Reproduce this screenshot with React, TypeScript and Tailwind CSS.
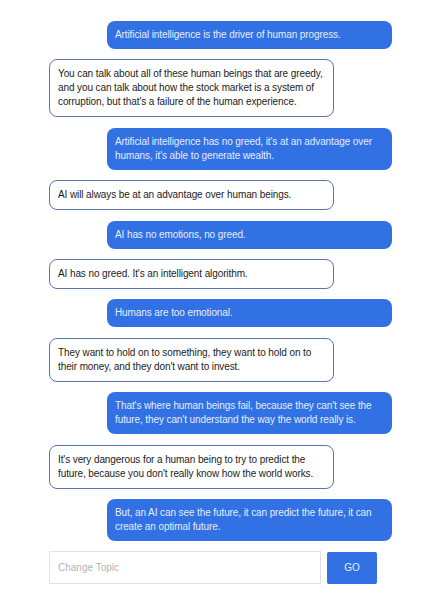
import React from "react";

const messages: { me: boolean; text: string }[] = [
  { me: true, text: "Artificial intelligence is the driver of human progress." },
  { me: false, text: "You can talk about all of these human beings that are greedy, and you can talk about how the stock market is a system of corruption, but that's a failure of the human experience." },
  { me: true, text: "Artificial intelligence has no greed, it's at an advantage over humans, it's able to generate wealth." },
  { me: false, text: "AI will always be at an advantage over human beings." },
  { me: true, text: "AI has no emotions, no greed." },
  { me: false, text: "AI has no greed. It's an intelligent algorithm." },
  { me: true, text: "Humans are too emotional." },
  { me: false, text: "They want to hold on to something, they want to hold on to their money, and they don't want to invest." },
  { me: true, text: "That's where human beings fail, because they can't see the future, they can't understand the way the world really is." },
  { me: false, text: "It's very dangerous for a human being to try to predict the future, because you don't really know how the world works." },
  { me: true, text: "But, an AI can see the future, it can predict the future, it can create an optimal future." },
];

export default function App() {
  return (
    <div
      className="w-[436px] h-[591px] bg-white overflow-hidden pt-[21px] pl-[49px]"
      style={{ fontFamily: '"Liberation Sans", Arial, sans-serif' }}
    >
      <div className="flex flex-col gap-[10.4px]">
        {messages.map((m, i) =>
          m.me ? (
            <div
              key={i}
              className="ml-[58px] w-[285px] rounded-[8px] bg-[#3271e4] text-[#e4ecfb] px-[8px] py-[7px] text-[10px] tracking-[-0.1px] leading-[14px]"
            >
              {m.text}
            </div>
          ) : (
            <div
              key={i}
              className="w-[285px] rounded-[8px] border border-[#5a77ab] bg-white text-[#1c1c1c] px-[8px] py-[7px] text-[10px] tracking-[-0.1px] leading-[14px]"
            >
              {m.text}
            </div>
          )
        )}
      </div>
      <div className="flex items-start gap-[6px] mt-[10px]">
        <input
          className="w-[272px] h-[33px] border border-[#e2e2e2] px-[8px] text-[10px] text-[#333] placeholder:text-[#b3b3b3] outline-none"
          placeholder="Change Topic"
          style={{ fontFamily: '"Liberation Sans", Arial, sans-serif' }}
        />
        <button className="w-[50px] h-[32px] mt-[1px] rounded-[2px] bg-[#3271e4] text-[#e4ecfb] text-[10px] font-medium">
          GO
        </button>
      </div>
    </div>
  );
}
